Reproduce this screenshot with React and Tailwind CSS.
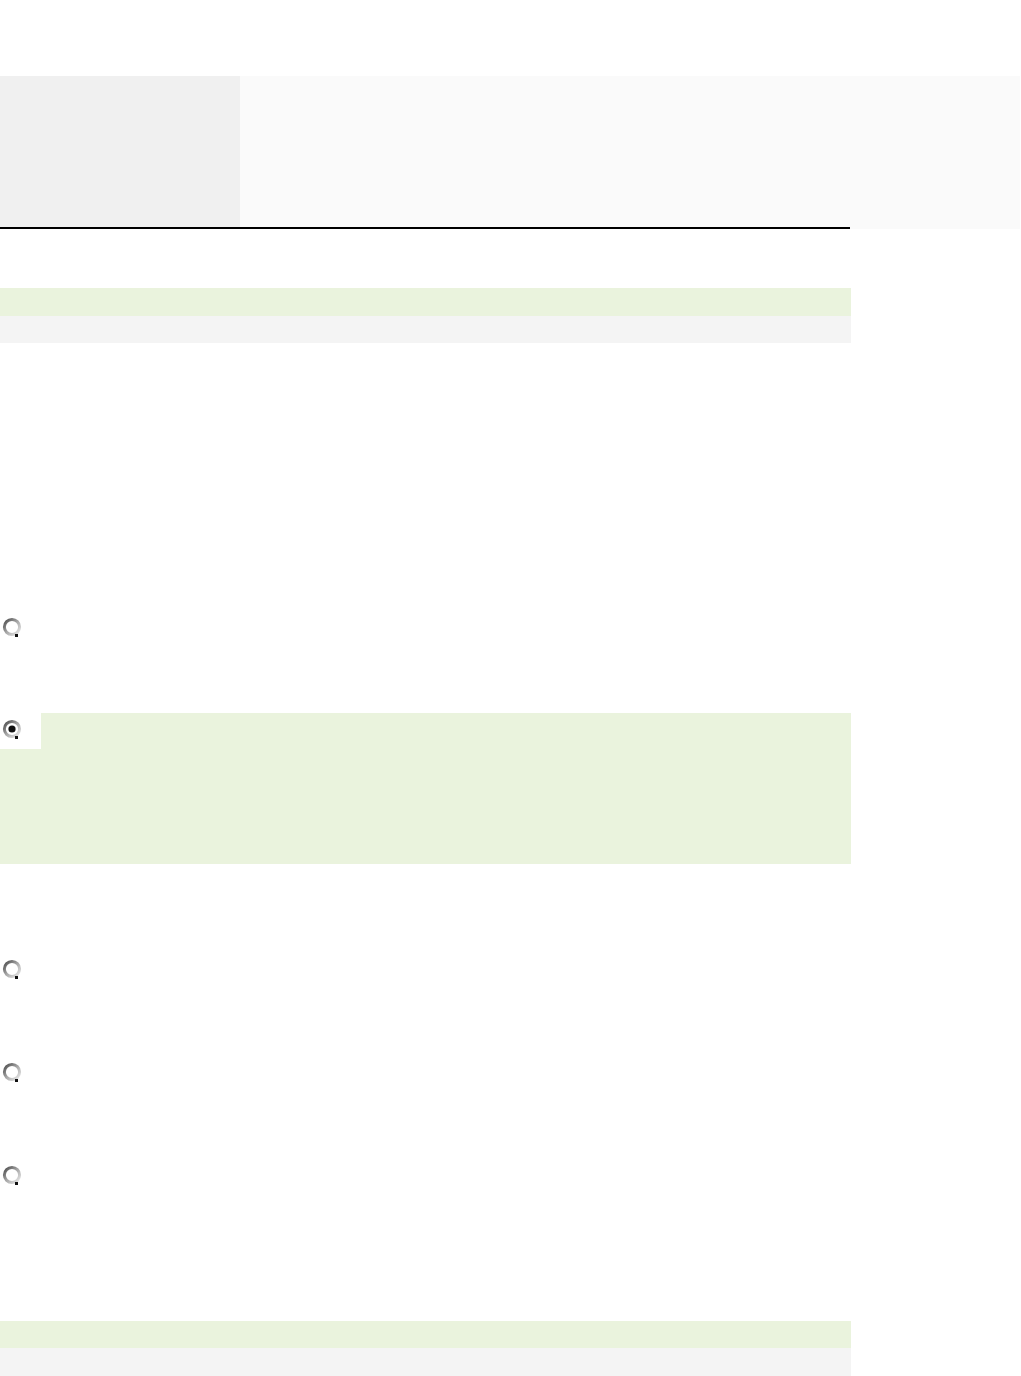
import { useState } from 'react';

const Radio = ({ checked, onClick }) => (
  <button onClick={onClick} className="block w-[20px] h-[20px] p-0 bg-transparent border-0 cursor-pointer">
    <svg width="20" height="20" viewBox="0 0 20 20">
      <defs>
        <linearGradient id="ring" x1="0" y1="0" x2="1" y2="1">
          <stop offset="0" stopColor="#4a4a4a" />
          <stop offset="0.5" stopColor="#a8a8a8" />
          <stop offset="1" stopColor="#ececec" />
        </linearGradient>
      </defs>
      <circle cx="10" cy="10" r="7.6" fill="#ffffff" stroke="url(#ring)" strokeWidth="3" />
      <rect x="13" y="17" width="3" height="3" fill="#111" />
      {checked && <circle cx="10" cy="10" r="3.6" fill="#111" />}
    </svg>
  </button>
);

const App = () => {
  const [selected, setSelected] = useState(1);

  return (
    <div className="w-[1021px] min-h-[1376px] bg-white pt-[76px]">

      {/* Header panels */}
      <div className="flex w-[1020px] h-[153px] bg-[#fafafa]">
        <div className="w-[851px] flex flex-col">
          <div className="flex-1 flex">
            <div className="w-[240px] bg-[#f0f0f0]" />
          </div>
          <div className="h-[2px] w-[850px] bg-black" />
        </div>
      </div>

      <div className="mt-[59px]">
        <div className="w-[851px] h-[28px] bg-[#eaf3dd]" />
        <div className="w-[851px] h-[27px] bg-[#f4f4f4]" />
      </div>

      {/* Options */}
      <div className="mt-[274px] pl-[2px] h-[20px]">
        <Radio checked={selected === 0} onClick={() => setSelected(0)} />
      </div>

      <div className="mt-[76px] w-[851px] h-[151px] flex flex-col">
        <div className="flex h-[36px]">
          <div className="w-[41px] bg-white pt-[6px] pl-[2px]">
            <Radio checked={selected === 1} onClick={() => setSelected(1)} />
          </div>
          <div className="flex-1 bg-[#eaf3dd]" />
        </div>
        <div className="flex-1 bg-[#eaf3dd]" />
      </div>

      <div className="mt-[95px] pl-[2px] h-[20px]">
        <Radio checked={selected === 2} onClick={() => setSelected(2)} />
      </div>
      <div className="mt-[83px] pl-[2px] h-[20px]">
        <Radio checked={selected === 3} onClick={() => setSelected(3)} />
      </div>
      <div className="mt-[83px] pl-[2px] h-[20px]">
        <Radio checked={selected === 4} onClick={() => setSelected(4)} />
      </div>

      <div className="mt-[136px] w-[851px]">
        <div className="h-[27px] bg-[#eaf3dd]" />
        <div className="h-[28px] bg-[#f4f4f4]" />
      </div>
    </div>
  );
};

export default App;
